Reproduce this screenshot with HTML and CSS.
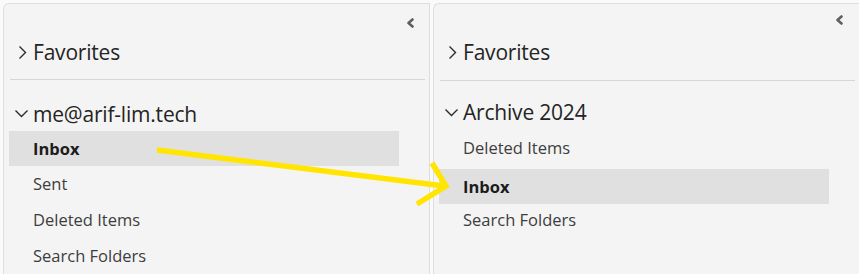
FILE: index.html
```html
<!DOCTYPE html>
<html lang="en">
<head>
    <meta charset="UTF-8">
    <title>Folder pane</title>
    <link rel="stylesheet" href="styles.css">
</head>
<body>
    <div class="panes">
        <!-- Volet gauche : compte principal -->
        <nav class="pane pane-left">
            <div class="pane-bar">
                <svg class="collapse" width="9" height="10" viewBox="0 0 9 10"><polyline points="6.5,1.5 2.5,5 6.5,8.5" fill="none" stroke="#5f5f5f" stroke-width="2.6" stroke-linejoin="round" stroke-linecap="round"/></svg>
            </div>
            <div class="group-head fav">
                <svg class="chev-right" width="9" height="15" viewBox="0 0 9 15"><polyline points="1.5,1.5 7.5,7.5 1.5,13.5" fill="none" stroke="#2b2b2b" stroke-width="1.4"/></svg>
                <span>Favorites</span>
            </div>
            <div class="divider"></div>
            <div class="group-head account">
                <svg class="chev-down" width="15" height="9" viewBox="0 0 15 9"><polyline points="1.5,1.5 7.5,7.5 13.5,1.5" fill="none" stroke="#2b2b2b" stroke-width="1.4"/></svg>
                <span>me@arif-lim.tech</span>
            </div>
            <ul class="folders">
                <li class="folder selected first">Inbox</li>
                <li class="folder">Sent</li>
                <li class="folder">Deleted Items</li>
                <li class="folder">Search Folders</li>
            </ul>
        </nav>

        <!-- Volet droit : archive -->
        <nav class="pane pane-right">
            <div class="pane-bar">
                <svg class="collapse" width="9" height="10" viewBox="0 0 9 10"><polyline points="6.5,1.5 2.5,5 6.5,8.5" fill="none" stroke="#5f5f5f" stroke-width="2.6" stroke-linejoin="round" stroke-linecap="round"/></svg>
            </div>
            <div class="group-head fav">
                <svg class="chev-right" width="9" height="15" viewBox="0 0 9 15"><polyline points="1.5,1.5 7.5,7.5 1.5,13.5" fill="none" stroke="#2b2b2b" stroke-width="1.4"/></svg>
                <span>Favorites</span>
            </div>
            <div class="divider"></div>
            <div class="group-head archive">
                <svg class="chev-down" width="15" height="9" viewBox="0 0 15 9"><polyline points="1.5,1.5 7.5,7.5 13.5,1.5" fill="none" stroke="#2b2b2b" stroke-width="1.4"/></svg>
                <span>Archive 2024</span>
            </div>
            <ul class="folders">
                <li class="folder deleted">Deleted Items</li>
                <li class="folder selected moved">Inbox</li>
                <li class="folder last">Search Folders</li>
            </ul>
        </nav>
    </div>

    <!-- Fleche d'annotation -->
    <svg class="annotation" width="859" height="274" viewBox="0 0 859 274">
        <g fill="none" stroke="#ffe500" stroke-width="5.5" stroke-linecap="butt" stroke-linejoin="miter">
            <line x1="157" y1="150" x2="444" y2="186"/>
            <polyline points="432,163 446,186 417,204"/>
        </g>
    </svg>
</body>
</html>
```

FILE: styles.css
```css
/* Styles généraux */
body {
    margin: 0;
    background-color: #fafafa;
    font-family: "Open Sans", "Noto Sans", sans-serif;
    color: #242424;
    overflow: hidden;
}

.panes {
    display: flex;
    gap: 3px;
    padding: 3px 0 0 3px;
    height: 271px;
}

/* Volets */
.pane {
    display: flex;
    flex-direction: column;
    background-color: #f4f4f4;
    border: 1px solid #dedede;
    border-bottom: none;
    border-top-left-radius: 6px;
}

.pane-left {
    width: 425px;
}

.pane-right {
    flex: 1;
    border-right: none;
}

.pane-bar {
    display: flex;
    justify-content: flex-end;
    align-items: center;
    height: 32px;
    padding-right: 14px;
}

.pane-left .pane-bar {
    padding-top: 4px;
    height: 32px;
}

.pane-right .pane-bar {
    height: 32px;
    padding-right: 15px;
}

/* En-têtes de groupe */
.group-head {
    display: flex;
    align-items: center;
    height: 32px;
    font-size: 21px;
    letter-spacing: -0.2px;
}

.pane-left .fav {
    margin-top: -2px;
}

.chev-right {
    margin-left: 14px;
    margin-right: 6px;
}

.chev-down {
    margin-left: 10px;
    margin-right: 4px;
}

.divider {
    height: 1px;
    margin: 12px 4px 0 6px;
    background-color: #d6d6d6;
}

.pane-right .divider {
    margin-top: 12px;
}

.account {
    margin-top: 17px;
    height: 34px;
}

.archive {
    margin-top: 15px;
}

/* Dossiers */
.folders {
    list-style: none;
    margin: 0;
    padding: 0;
}

.folder {
    display: flex;
    align-items: center;
    height: 36px;
    padding-left: 29px;
    font-size: 16.5px;
    color: #3d3d3d;
}

.folder.selected {
    height: 35px;
    margin-left: 5px;
    margin-right: 30px;
    padding-left: 24px;
    background-color: #e0e0e0;
    font-weight: bold;
    color: #1c1c1c;
}

.folder.first {
    margin-top: 1px;
}

.deleted {
    margin-top: 2px;
    height: 35px;
}

.moved {
    margin-top: 4px;
}

.last {
    height: 30px;
}

/* Annotation */
.annotation {
    position: absolute;
    top: 0;
    left: 0;
    pointer-events: none;
}
```
